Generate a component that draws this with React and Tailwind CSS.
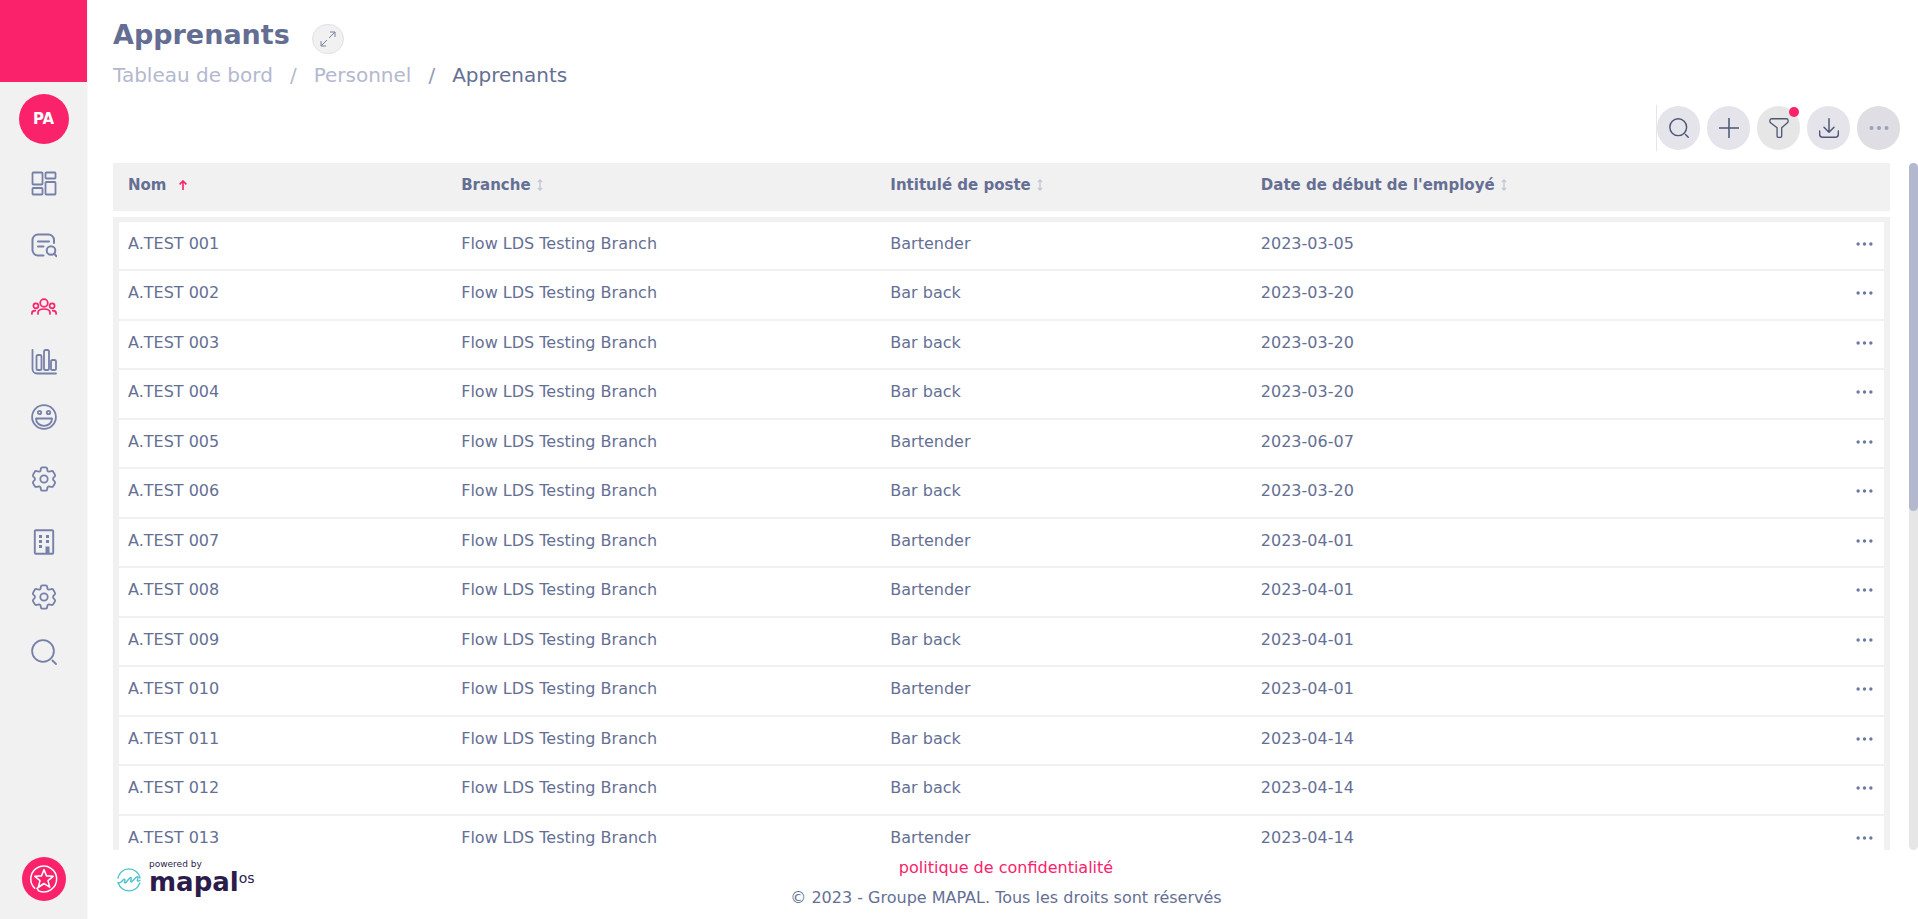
import React from "react";

const learners = [
  { name: "A.TEST 001", branch: "Flow LDS Testing Branch", job: "Bartender", start: "2023-03-05" },
  { name: "A.TEST 002", branch: "Flow LDS Testing Branch", job: "Bar back", start: "2023-03-20" },
  { name: "A.TEST 003", branch: "Flow LDS Testing Branch", job: "Bar back", start: "2023-03-20" },
  { name: "A.TEST 004", branch: "Flow LDS Testing Branch", job: "Bar back", start: "2023-03-20" },
  { name: "A.TEST 005", branch: "Flow LDS Testing Branch", job: "Bartender", start: "2023-06-07" },
  { name: "A.TEST 006", branch: "Flow LDS Testing Branch", job: "Bar back", start: "2023-03-20" },
  { name: "A.TEST 007", branch: "Flow LDS Testing Branch", job: "Bartender", start: "2023-04-01" },
  { name: "A.TEST 008", branch: "Flow LDS Testing Branch", job: "Bartender", start: "2023-04-01" },
  { name: "A.TEST 009", branch: "Flow LDS Testing Branch", job: "Bar back", start: "2023-04-01" },
  { name: "A.TEST 010", branch: "Flow LDS Testing Branch", job: "Bartender", start: "2023-04-01" },
  { name: "A.TEST 011", branch: "Flow LDS Testing Branch", job: "Bar back", start: "2023-04-14" },
  { name: "A.TEST 012", branch: "Flow LDS Testing Branch", job: "Bar back", start: "2023-04-14" },
  { name: "A.TEST 013", branch: "Flow LDS Testing Branch", job: "Bartender", start: "2023-04-14" },
];

const columns = [
  { label: "Nom", width: "w-[18.75%]", sorted: true },
  { label: "Branche", width: "w-[24.15%]" },
  { label: "Intitulé de poste", width: "w-[20.85%]" },
  { label: "Date de début de l'employé", width: "" },
];

const Icon = ({ children, className = "size-[26px]", stroke = "1.8" }) => (
  <svg
    viewBox="0 0 26 26"
    className={className}
    fill="none"
    stroke="currentColor"
    strokeWidth={stroke}
    strokeLinecap="round"
    strokeLinejoin="round"
    aria-hidden="true"
  >
    {children}
  </svg>
);

const DashboardIcon = () => (
  <Icon>
    <rect x="1.5" y="1.5" width="10" height="12" rx="0.8" />
    <rect x="14.5" y="1.5" width="10" height="6" rx="0.8" />
    <rect x="1.5" y="17" width="10" height="6.5" rx="0.8" />
    <rect x="14.5" y="11" width="10" height="12.5" rx="0.8" />
  </Icon>
);

const ReportIcon = () => (
  <Icon stroke="2">
    <path d="M12.5 23.5H7A5.500 5.500 0 0 1 1.500 18V8A5.500 5.500 0 0 1 7 2.500h10.500A5.500 5.500 0 0 1 23 8v3" />
    <path d="M7 9.500h11M7 14.500h5.500" />
    <circle cx="20" cy="18.500" r="4.300" />
    <path d="m23.200 21.800 2.300 2.400" />
  </Icon>
);

const PeopleIcon = () => (
  <Icon stroke="1.7">
    <circle cx="13" cy="9" r="3.800" />
    <circle cx="4.900" cy="11.800" r="2.500" />
    <circle cx="21.100" cy="11.800" r="2.500" />
    <path d="M7 20v-1.300c0-2.300 2.200-3.700 6-3.700s6 1.400 6 3.700V20" />
    <path d="M.9 20v-.8c0-1.500 1.100-2.500 3.400-2.500M25.100 20v-.8c0-1.500-1.100-2.500-3.400-2.500" />
  </Icon>
);

const ChartIcon = () => (
  <Icon>
    <path d="M1.500 1v19a4.500 4.500 0 0 0 4.500 4.500h19" />
    <rect x="5.500" y="6" width="5" height="15" rx="1.600" />
    <rect x="13" y="1" width="5" height="20" rx="1.600" />
    <rect x="20" y="11" width="5" height="10" rx="1.600" />
  </Icon>
);

const SmileIcon = () => (
  <Icon>
    <circle cx="13" cy="13" r="11.900" />
    <circle cx="8.500" cy="8.500" r="1.700" />
    <circle cx="17.500" cy="8.500" r="1.700" />
    <path d="M5 14.500h16c0 4.300-3.300 7.300-8 7.300s-8-3-8-7.300Z" />
  </Icon>
);

const GearIcon = () => (
  <Icon>
    <circle cx="13" cy="13" r="3.700" />
    <path d="M11.300 1.300h3.400q1.200 0 1.400 1.200l.3 2q.2 1 1.200 1.200l2.700-.6q1.400-.4 2.100.9l1.500 2.600q.7 1.200-.3 2.100l-1.200 1.100q-.8 1.200 0 2.400l1.200 1.100q1 .9.300 2.100l-1.500 2.600q-.7 1.300-2.100.9l-2.700-.6q-1 .2-1.200 1.200l-.3 2q-.2 1.200-1.400 1.200h-3.400q-1.200 0-1.400-1.200l-.3-2q-.2-1-1.200-1.200l-2.700.6q-1.400.4-2.100-.9l-1.500-2.600q-.7-1.200.3-2.100l1.200-1.100q.8-1.200 0-2.400l-1.200-1.100q-1-.9-.3-2.100l1.500-2.600q.7-1.300 2.100-.9l2.700.6q1-.2 1.200-1.200l.3-2q.2-1.200 1.400-1.200Z" />
  </Icon>
);

const BuildingIcon = () => (
  <Icon stroke="1.9">
    <rect x="3.800" y="1.200" width="18.400" height="23.600" rx="1" />
    <g fill="currentColor" stroke="none">
      <path d="M8 6h3v3H8zM15 6h3v3h-3zM8 11h3v3H8zM15 11h3v3h-3zM8 16h3v3H8zM14.500 17.500h4V25h-4z" />
    </g>
  </Icon>
);

const SearchIcon = ({ className, stroke }) => (
  <Icon className={className} stroke={stroke}>
    <circle cx="12" cy="12" r="10.900" />
    <path d="m21.500 21.500 3.500 3.500" />
  </Icon>
);

const DotsIcon = ({ className }) => (
  <svg viewBox="0 0 20 4" className={className} fill="currentColor" aria-hidden="true">
    <circle cx="2.500" cy="2" r="2" />
    <circle cx="10" cy="2" r="2" />
    <circle cx="17.500" cy="2" r="2" />
  </svg>
);

const navItems = [
  { label: "Tableau de bord", icon: DashboardIcon, space: "h-[61px]" },
  { label: "Rapports", icon: ReportIcon, space: "h-[62px]" },
  { label: "Personnel", icon: PeopleIcon, space: "h-[62px]", active: true },
  { label: "Statistiques", icon: ChartIcon, space: "h-[48px]" },
  { label: "Satisfaction", icon: SmileIcon, space: "h-[62px]" },
  { label: "Paramètres", icon: GearIcon, space: "h-[62px]" },
  { label: "Entreprise", icon: BuildingIcon, space: "h-[64px]" },
  { label: "Configuration", icon: GearIcon, space: "h-[46px]" },
  { label: "Recherche", icon: SearchIcon, space: "h-[64px]" },
];

const Sidebar = () => (
  <aside className="flex w-[88px] shrink-0 flex-col items-center border-r border-[#f8f8f8] bg-[#f1f1f1]">
    <div className="h-[82px] w-full shrink-0 bg-[#f9226b]" />
    <button className="mt-3 flex size-[50px] shrink-0 items-center justify-center rounded-full bg-[#f9226b] text-[15px] font-bold text-white">
      PA
    </button>
    <nav className="mt-[9px] flex flex-col">
      {navItems.map(({ label, icon: NavIcon, space, active }) => (
        <a
          key={label}
          href="#"
          aria-label={label}
          className={`flex w-[87px] items-center justify-center ${space} ${
            active ? "text-[#f9226b]" : "text-[#7780a8]"
          }`}
        >
          <NavIcon />
        </a>
      ))}
    </nav>
    <button
      aria-label="Favoris"
      className="mt-auto mb-[18px] flex size-[44px] shrink-0 items-center justify-center rounded-full bg-[#f9226b] text-white"
    >
      <Icon className="size-7" stroke="1.400">
        <path d="M4.300 21.500A12 12 0 1 1 8 24l-1.500-2.300 6.500-4.500" />
        <path d="m13 4.300 2.300 5.800 6.200.4-4.800 4 1.600 6.100-5.300-3.400-5.300 3.400 1.600-6.100-4.800-4 6.200-.4Z" />
      </Icon>
    </button>
  </aside>
);

const Toolbar = () => (
  <div className="flex h-[46px] items-center gap-[7px] self-end border-l border-[#e6e6e6] text-[#4d5675]">
    <button aria-label="Rechercher" className="flex h-11 w-[43px] items-center justify-center rounded-full bg-[#e5e4eb]">
      <SearchIcon className="size-5" stroke="1.900" />
    </button>
    <button aria-label="Ajouter" className="flex h-11 w-[43px] items-center justify-center rounded-full bg-[#e5e4eb]">
      <Icon className="size-5" stroke="2">
        <path d="M13 0.500v25M0.500 13h25" />
      </Icon>
    </button>
    <button aria-label="Filtrer" className="relative flex h-11 w-[43px] items-center justify-center rounded-full bg-[#e6e6e6]">
      <Icon className="size-5" stroke="1.700">
        <path d="M3.500 1h19a2.300 2.300 0 0 1 2.300 2.300v1.200c0 .7-.3 1.300-.8 1.800l-7.500 6.500v10.500c0 1-.8 1.900-1.900 1.900h-2.200c-1.100 0-1.900-.9-1.900-1.900V12.800L2 6.300c-.5-.5-.8-1.100-.8-1.800V3.300A2.300 2.300 0 0 1 3.500 1Z" />
      </Icon>
      <span className="absolute top-px right-px size-2.5 rounded-full bg-[#f9226b]" />
    </button>
    <button aria-label="Télécharger" className="flex h-11 w-[43px] items-center justify-center rounded-full bg-[#e5e4eb]">
      <Icon className="size-5" stroke="1.900">
        <path d="M13 1v17M6.500 12l6.500 6.500 6.500-6.500" />
        <path d="M.8 17v4a4 4 0 0 0 4 4h16.400a4 4 0 0 0 4-4v-4" />
      </Icon>
    </button>
    <button aria-label="Plus d'options" className="flex h-11 w-[43px] items-center justify-center rounded-full bg-[#dfdee4]">
      <DotsIcon className="h-1 w-5 text-[#9ba1bc]" />
    </button>
  </div>
);

const SortArrow = ({ sorted }) =>
  sorted ? (
    <svg viewBox="0 0 8 10" className="h-2.5 w-2 text-[#f9226b]" fill="none" stroke="currentColor" strokeWidth="1.6">
      <path d="M4 10V1M.6 4.400 4 1l3.400 3.400" />
    </svg>
  ) : (
    <svg viewBox="0 0 6 12" className="h-3 w-1.5 text-[#c6c8d6]" fill="none" stroke="currentColor" strokeWidth="1.4">
      <path d="M3 1v10M1 3l2-2 2 2M1 9l2 2 2-2" />
    </svg>
  );

const LearnersTable = () => (
  <table className="w-full table-fixed border-separate border-spacing-0 text-left">
    <thead>
      <tr className="h-[54px]">
        {columns.map((col) => (
          <th
            key={col.label}
            className={`border-b-6 border-white bg-[#f1f1f1] pb-1 pl-[15px] text-[15px] font-bold ${col.width}`}
          >
            <span className={`flex items-center ${col.sorted ? "gap-3" : "gap-1.5"}`}>
              {col.label}
              <SortArrow sorted={col.sorted} />
            </span>
          </th>
        ))}
        <th className="w-[60px] border-b-6 border-white bg-[#f1f1f1]" />
      </tr>
    </thead>
    <tbody className="[&_td]:border-b-2 [&_td]:border-[#f1f1f1] [&_td]:pb-1 [&>tr:first-child>td]:border-t-5">
      {learners.map((row) => (
        <tr key={row.name} className="h-[49px] first:h-[54px] even:h-[50px]">
          <td className="border-l-6 pl-[9px]">{row.name}</td>
          <td className="pl-[15px]">{row.branch}</td>
          <td className="pl-[15px]">{row.job}</td>
          <td className="pl-[15px]">{row.start}</td>
          <td className="border-r-6 pr-[11px]">
            <button aria-label={`Actions ${row.name}`} className="ml-auto flex h-5 items-center">
              <DotsIcon className="h-1 w-[17px] text-[#6b78a3]" />
            </button>
          </td>
        </tr>
      ))}
    </tbody>
  </table>
);

const Footer = () => (
  <footer className="flex h-[69px] shrink-0 items-start pl-[29px]">
    <div className="flex w-[200px] items-start gap-2 pt-2 text-[#2c1c4b]">
      <svg viewBox="0 0 24 24" className="mt-2.5 size-6 text-[#4cc3cb]" fill="none" stroke="currentColor" strokeWidth="1.400" strokeLinecap="round" strokeLinejoin="round">
        <path d="M1 10A11.200 11.200 0 0 1 23 10M22.700 15A11.200 11.200 0 0 1 1.300 15" />
        <path d="M1 14.800c2.500 0 4-1.300 5.200-3 .8-1.100 1.900-.7 1.700.5l-.4 1.700c-.2 1 .6 1.300 1.300.5l4-4.500c.8-.9 1.800-.5 1.500.6l-.6 2.400c-.3 1 .6 1.300 1.300.6L19.500 9c.8-.8 1.700-.3 1.500.6l-.6 2.800c-.1.600.3.900.9.700l1.700-.8" />
      </svg>
      <div className="flex flex-col">
        <span className="text-[9px] leading-3">powered by</span>
        <span className="flex text-[26px] leading-6 font-bold">
          mapal
          <span className="text-sm leading-4 font-normal">os</span>
        </span>
      </div>
    </div>
    <div className="flex flex-1 flex-col items-center pr-[223px] text-base">
      <a href="#" className="mt-1.5 leading-6 text-[#f9226b]">
        politique de confidentialité
      </a>
      <p className="mt-1.5 leading-6">© 2023 - Groupe MAPAL. Tous les droits sont réservés</p>
    </div>
  </footer>
);

const App = () => {
  return (
    <div className="flex h-screen overflow-hidden bg-white font-['DejaVu_Sans',sans-serif] text-base text-[#656f94]">
      <Sidebar />

      <div className="flex min-w-0 flex-1 flex-col">
        {/* Title and breadcrumb */}
        <header className="pt-3 pl-[25px]">
          <div className="flex h-[42px] items-center gap-[22px]">
            <h1 className="pt-1 text-[27px] font-bold text-[#646e93]">Apprenants</h1>
            <button
              aria-label="Agrandir"
              className="mt-3 flex h-[30px] w-8 items-center justify-center self-start rounded-full border border-[#e2e2e8] bg-[#f1f1f1] text-[#76809f]"
            >
              <svg viewBox="0 0 16 16" className="size-4" fill="none" stroke="currentColor" strokeWidth="1">
                <path d="M1 15 7 9M9 7l6-6M10 1h5v5M1 10v5h5" />
              </svg>
            </button>
          </div>
          <nav className="flex h-[42px] items-center gap-[17px] text-xl text-[#b4b8cf]">
            <a href="#">Tableau de bord</a>
            <span>/</span>
            <a href="#">Personnel</a>
            <span className="text-[#9298b5]">/</span>
            <span className="text-[#656f94]">Apprenants</span>
          </nav>
        </header>

        <div className="mt-[9px] mr-[18px] mb-3 flex flex-col">
          <Toolbar />
        </div>

        {/* Learners list with its scrollbar */}
        <main className="flex min-h-0 flex-1 pl-[25px]">
          <div className="min-w-0 flex-1 overflow-hidden">
            <LearnersTable />
          </div>
          <div className="ml-[19px] w-[9px] rounded-full bg-[#e6e6e6]">
            <div className="h-[348px] rounded-full bg-[#b4b8cf]" />
          </div>
        </main>

        <Footer />
      </div>
    </div>
  );
};

export default App;
